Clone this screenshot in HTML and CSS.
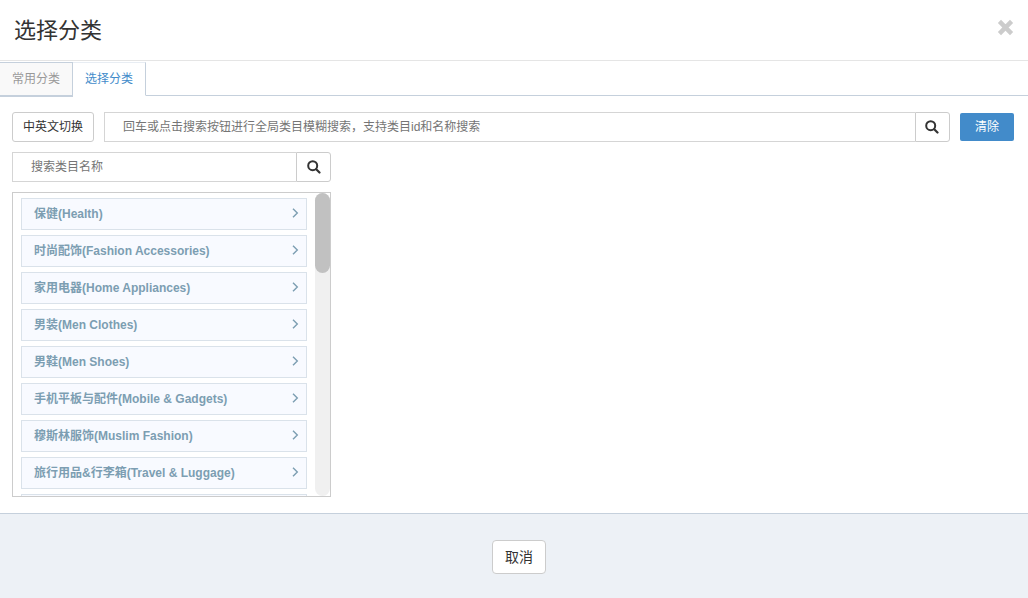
FILE: index.html
```html
<!DOCTYPE html>
<html lang="zh-CN">
<head>
<meta charset="utf-8">
<meta name="viewport" content="width=device-width, initial-scale=1">
<title>选择分类</title>
<link rel="stylesheet" href="styles.css">
</head>
<body>
<svg class="defs" aria-hidden="true">
  <symbol id="search" viewBox="0 0 14 14">
    <circle cx="5.700" cy="5.700" r="4.500" fill="none" stroke="currentColor" stroke-width="2"/>
    <path d="M9.200 9.200l3.300 3.300" fill="none" stroke="currentColor" stroke-width="2.200" stroke-linecap="round"/>
  </symbol>
  <symbol id="chevron" viewBox="0 0 8 12">
    <path d="M2 1.700L6.300 6l-4.300 4.300" fill="none" stroke="currentColor" stroke-width="1.400"/>
  </symbol>
</svg>
<div class="modal">
  <header class="modal-header">
    <h1 class="title">选择分类</h1>
    <button class="close" type="button" aria-label="关闭">
      <svg class="icon-close" viewBox="0 0 16 16"><path d="M2.300 2.300l11.400 11.400M13.700 2.300l-11.400 11.400" fill="none" stroke="currentColor" stroke-width="4.200"/></svg>
    </button>
  </header>
  <nav class="tabs">
    <a class="tab" href="#common">常用分类</a>
    <a class="tab tab-active" href="#choose">选择分类</a>
  </nav>
  <main class="content">
    <div class="toolbar">
      <button class="btn" type="button">中英文切换</button>
      <div class="search-group search-wide">
        <input class="search-input" type="text" aria-label="全局搜索" placeholder="回车或点击搜索按钮进行全局类目模糊搜索，支持类目id和名称搜索">
        <button class="search-btn" type="button" aria-label="搜索"><svg class="icon-search"><use href="#search"/></svg></button>
      </div>
      <button class="btn-clear" type="button">清除</button>
    </div>
    <section class="picker">
      <div class="search-group">
        <input class="search-input" type="text" aria-label="搜索类目" placeholder="搜索类目名称">
        <button class="search-btn" type="button" aria-label="搜索"><svg class="icon-search"><use href="#search"/></svg></button>
      </div>
      <div class="list-box">
        <ul class="list">
          <li><a class="item" href="#c1">保健(Health)<svg class="icon-chevron"><use href="#chevron"/></svg></a></li>
          <li><a class="item" href="#c2">时尚配饰(Fashion Accessories)<svg class="icon-chevron"><use href="#chevron"/></svg></a></li>
          <li><a class="item" href="#c3">家用电器(Home Appliances)<svg class="icon-chevron"><use href="#chevron"/></svg></a></li>
          <li><a class="item" href="#c4">男装(Men Clothes)<svg class="icon-chevron"><use href="#chevron"/></svg></a></li>
          <li><a class="item" href="#c5">男鞋(Men Shoes)<svg class="icon-chevron"><use href="#chevron"/></svg></a></li>
          <li><a class="item" href="#c6">手机平板与配件(Mobile &amp; Gadgets)<svg class="icon-chevron"><use href="#chevron"/></svg></a></li>
          <li><a class="item" href="#c7">穆斯林服饰(Muslim Fashion)<svg class="icon-chevron"><use href="#chevron"/></svg></a></li>
          <li><a class="item" href="#c8">旅行用品&amp;行李箱(Travel &amp; Luggage)<svg class="icon-chevron"><use href="#chevron"/></svg></a></li>
          <li class="item"></li>
        </ul>
        <div class="track"><div class="thumb"></div></div>
      </div>
    </section>
  </main>
  <footer class="modal-footer">
    <button class="btn-cancel" type="button">取消</button>
  </footer>
</div>
</body>
</html>
```

FILE: styles.css
```css
* {
  box-sizing: border-box;
}

body {
  margin: 0;
  background: #fff;
  color: #333;
  font: 12px/18px "Liberation Sans", "Noto Sans CJK SC", sans-serif;
}

button,
input {
  margin: 0;
  font: inherit;
  color: inherit;
}

button {
  cursor: pointer;
}

a {
  text-decoration: none;
}

.defs {
  display: none;
}

.modal {
  display: flex;
  flex-direction: column;
  min-height: 100vh;
}

.modal-header {
  display: flex;
  justify-content: space-between;
  align-items: flex-start;
  padding: 14px 14px 13px;
  border-bottom: 1px solid #e5e5e5;
}

.title {
  margin: 0;
  font-size: 22px;
  line-height: 33px;
  font-weight: 400;
}

.close {
  display: flex;
  padding: 5px 0;
  border: 0;
  background: none;
  color: #ccc;
}

.icon-close {
  width: 17px;
  height: 17px;
}

.tabs {
  display: flex;
  margin-top: 1px;
  border-bottom: 1px solid #c5d0dc;
}

.tab {
  margin-bottom: -2px;
  padding: 7px 12px;
  border: 1px solid #c5d0dc;
  border-bottom-width: 2px;
  border-left: 0;
  background: #f9f9f9;
  color: #999;
}

.tab-active {
  margin-bottom: -1px;
  border-top-color: #e8edf3;
  border-bottom: 1px solid #fff;
  background: #fff;
  color: #428bca;
}

.content {
  display: flex;
  flex-direction: column;
  gap: 10px;
  padding: 16px 14px 16px 12px;
}

.toolbar {
  display: flex;
  align-items: center;
  gap: 10px;
}

.btn {
  height: 30px;
  padding: 0 10px;
  border: 1px solid #ccc;
  border-radius: 3px;
  background: #fff;
}

.search-group {
  display: flex;
  height: 30px;
}

.search-wide {
  flex: 1;
}

.search-input {
  flex: 1;
  min-width: 0;
  padding: 0 18px;
  border: 1px solid #d5d5d5;
  border-right: 0;
  background: #fff;
}

.search-input::placeholder {
  color: #757575;
  opacity: 1;
}

.search-btn {
  display: flex;
  align-items: center;
  justify-content: center;
  width: 35px;
  padding: 0 0 1px;
  border: 1px solid #ccc;
  border-radius: 0 3px 3px 0;
  background: #fff;
}

.icon-search {
  width: 14px;
  height: 14px;
}

.btn-clear {
  height: 28px;
  padding: 0 15px;
  border: 0;
  border-radius: 2px;
  background: #428bca;
  color: #fff;
}

.picker {
  display: flex;
  flex-direction: column;
  gap: 10px;
  width: 319px;
}

.list-box {
  display: flex;
  height: 305px;
  border: 1px solid #ccc;
}

.list {
  flex: 1;
  display: flex;
  flex-direction: column;
  gap: 5px;
  margin: 0;
  padding: 5px 8px;
  overflow-y: auto;
  scrollbar-width: none;
  list-style: none;
}

.item {
  display: flex;
  flex: none;
  justify-content: space-between;
  align-items: center;
  height: 32px;
  padding: 0 7px 0 12px;
  border: 1px solid #dae2ea;
  background: #f8faff;
  color: #7c9eb2;
  font-weight: 700;
}

.icon-chevron {
  width: 8px;
  height: 12px;
  margin-bottom: 2px;
}

.track {
  width: 15px;
  border-radius: 8px;
  background: #f0f0f0;
}

.thumb {
  height: 80px;
  border-radius: 8px;
  background: #c1c1c1;
}

.modal-footer {
  flex: 1;
  display: flex;
  justify-content: center;
  align-items: flex-start;
  padding: 26px 0 24px 10px;
  border-top: 1px solid #c5d0dc;
  background: #edf1f6;
}

.btn-cancel {
  height: 34px;
  padding: 0 12px;
  border: 1px solid #ccc;
  border-radius: 4px;
  background: #fff;
  font-size: 14px;
}
```
